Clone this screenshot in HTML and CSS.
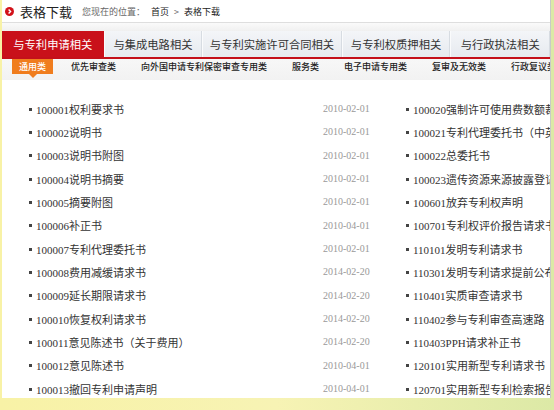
FILE: index.html
```html
<!DOCTYPE html>
<html lang="zh-CN">
<head>
<meta charset="utf-8">
<title>表格下载</title>
<link rel="stylesheet" href="styles.css">
</head>
<body>
<div class="page">
  <div class="head">
    <span class="head-icon"><svg width="9" height="9" viewBox="0 0 9 9"><circle cx="4.5" cy="4.5" r="4.5" fill="#d2121a"/><path d="M3.6 2.4 L5.6 4.5 L3.6 6.6" fill="none" stroke="#fff" stroke-width="1.4"/></svg></span>
    <span class="head-title">表格下载</span>
    <span class="crumb"><span class="crumb-label">您现在的位置：</span><span class="crumb-link">首页</span><span class="crumb-sep">&gt;</span><span class="crumb-link">表格下载</span></span>
  </div>
  <div class="band"></div>
  <div class="tabs">
    <div class="tab tab-active t1">与专利申请相关</div>
    <div class="tab t2">与集成电路相关</div>
    <div class="tab t3">与专利实施许可合同相关</div>
    <div class="tab t4">与专利权质押相关</div>
    <div class="tab t5">与行政执法相关</div>
  </div>
  <div class="subtabs">
    <div class="sub sub-active">通用类</div>
    <div class="sub">优先审查类</div>
    <div class="sub">向外国申请专利保密审查专用类</div>
    <div class="sub">服务类</div>
    <div class="sub">电子申请专用类</div>
    <div class="sub">复审及无效类</div>
    <div class="sub">行政复议类</div>
  </div>
  <div class="lists">
    <ul class="list">
      <li><span class="name">100001权利要求书</span><span class="date">2010-02-01</span></li>
      <li><span class="name">100002说明书</span><span class="date">2010-02-01</span></li>
      <li><span class="name">100003说明书附图</span><span class="date">2010-02-01</span></li>
      <li><span class="name">100004说明书摘要</span><span class="date">2010-02-01</span></li>
      <li><span class="name">100005摘要附图</span><span class="date">2010-02-01</span></li>
      <li><span class="name">100006补正书</span><span class="date">2010-04-01</span></li>
      <li><span class="name">100007专利代理委托书</span><span class="date">2010-02-01</span></li>
      <li><span class="name">100008费用减缓请求书</span><span class="date">2014-02-20</span></li>
      <li><span class="name">100009延长期限请求书</span><span class="date">2014-02-20</span></li>
      <li><span class="name">100010恢复权利请求书</span><span class="date">2014-02-20</span></li>
      <li><span class="name">100011意见陈述书（关于费用）</span><span class="date">2014-02-20</span></li>
      <li><span class="name">100012意见陈述书</span><span class="date">2010-04-01</span></li>
      <li><span class="name">100013撤回专利申请声明</span><span class="date">2010-04-01</span></li>
    </ul>
    <ul class="list">
      <li><span class="name">100020强制许可使用费数额裁决请求书</span><span class="date">2010-02-01</span></li>
      <li><span class="name">100021专利代理委托书（中英文）</span><span class="date">2010-02-01</span></li>
      <li><span class="name">100022总委托书</span><span class="date">2010-02-01</span></li>
      <li><span class="name">100023遗传资源来源披露登记表</span><span class="date">2010-02-01</span></li>
      <li><span class="name">100601放弃专利权声明</span><span class="date">2010-02-01</span></li>
      <li><span class="name">100701专利权评价报告请求书</span><span class="date">2010-04-01</span></li>
      <li><span class="name">110101发明专利请求书</span><span class="date">2010-02-01</span></li>
      <li><span class="name">110301发明专利请求提前公布声明</span><span class="date">2014-02-20</span></li>
      <li><span class="name">110401实质审查请求书</span><span class="date">2014-02-20</span></li>
      <li><span class="name">110402参与专利审查高速路（PPH）请求书</span><span class="date">2014-02-20</span></li>
      <li><span class="name">110403PPH请求补正书</span><span class="date">2014-02-20</span></li>
      <li><span class="name">120101实用新型专利请求书</span><span class="date">2010-04-01</span></li>
      <li><span class="name">120701实用新型专利检索报告请求书</span><span class="date">2010-04-01</span></li>
    </ul>
  </div>
</div>
</body>
</html>
```

FILE: styles.css
```css
html, body {
  margin: 0;
  padding: 0;
}
body {
  width: 554px;
  height: 410px;
  overflow: hidden;
  background: linear-gradient(to right, #f8f2a6 0%, #f7f3b4 50%, #dce9a6 100%);
  font-family: "Noto Sans CJK SC", sans-serif;
  color: #333;
}
.page {
  margin: 0 3px 0 2px;
  height: 398px;
  background: #fff;
  border-right: 1px solid #c9c9c9;
  overflow: hidden;
  box-sizing: border-box;
}
.head {
  height: 22px;
  border-bottom: 1px solid #dedede;
  display: flex;
  align-items: center;
  padding-left: 3px;
}
.head-icon {
  display: flex;
  width: 9px;
  height: 9px;
  margin-right: 6px;
  margin-top: 1px;
}
.head-title {
  font-size: 13px;
  color: #222;
  margin-right: 10px;
  line-height: 1;
}
.crumb {
  font-size: 9px;
  line-height: 1;
  display: flex;
  align-items: center;
  margin-top: 1px;
}
.crumb-label {
  color: #666;
  margin-right: 6px;
}
.crumb-link {
  color: #222;
}
.crumb-sep {
  color: #666;
  margin: 0 5px;
}
.band {
  height: 8px;
  background: linear-gradient(#fafafa, #f0f0f0);
}
.tabs {
  display: flex;
  height: 26px;
  border-bottom: 2px solid #c4101a;
  background: #eef1f4;
}
.tab {
  box-sizing: border-box;
  height: 26px;
  display: flex;
  align-items: center;
  justify-content: center;
  font-size: 11.3px;
  color: #333;
  background: linear-gradient(#f3f5f8, #e6eaef);
  border-right: 1px solid #d7dce2;
  border-left: 1px solid #fafbfc;
  white-space: nowrap;
}
.tab-active {
  background: #c9101a;
  color: #fff;
  border: none;
}
.t1 { width: 102px; }
.t2 { width: 99px; }
.t3 { width: 140px; }
.t4 { width: 109px; }
.t5 { width: 100px; }
.subtabs {
  height: 21px;
  display: flex;
  align-items: flex-start;
  gap: 25px;
  padding-left: 10px;
  background: linear-gradient(#f7f7f7, #f2f2f2);
  white-space: nowrap;
}
.sub {
  font-size: 9px;
  color: #222;
  line-height: 15px;
  height: 15px;
  font-weight: 500;
}
.sub-active {
  position: relative;
  background: #f07d1e;
  color: #fff;
  padding: 0 7px;
  margin-right: -7px;
}
.sub-active::after {
  content: "";
  position: absolute;
  left: 50%;
  top: 15px;
  margin-left: -4px;
  border-left: 4px solid transparent;
  border-right: 4px solid transparent;
  border-top: 4px solid #f07d1e;
}
.lists {
  display: flex;
  padding: 17px 0 0 26px;
}
.list {
  list-style: none;
  margin: 0;
  padding: 0;
  width: 377px;
  flex: none;
}
.list li {
  height: 23.33px;
  display: flex;
  align-items: center;
  white-space: nowrap;
}
.name {
  position: relative;
  width: 295px;
  flex: none;
  padding-left: 8px;
  box-sizing: border-box;
  font-family: "Liberation Serif", "Noto Sans CJK SC", serif;
  font-size: 11px;
  color: #333;
  overflow: visible;
}
.name::before {
  content: "";
  position: absolute;
  left: 1px;
  top: 50%;
  margin-top: -1px;
  width: 3px;
  height: 3px;
  background: #444;
}
.date {
  font-family: "Liberation Serif", serif;
  font-size: 10px;
  color: #999;
}
```
